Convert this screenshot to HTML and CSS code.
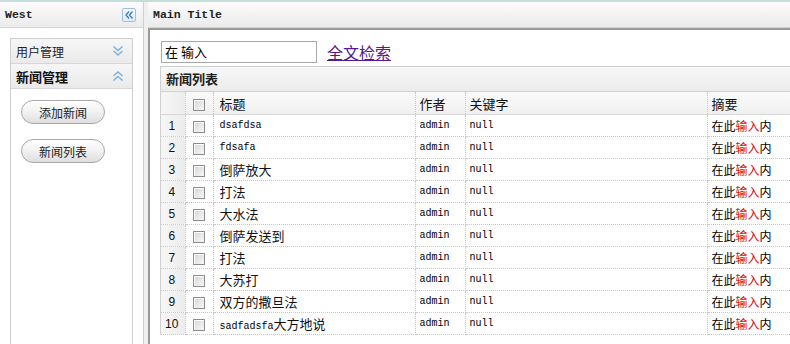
FILE: index.html
```html
<!DOCTYPE html>
<html>
<head>
<meta charset="utf-8">
<link rel="stylesheet" href="styles.css">
</head>
<body>
<div class="top"></div>
<div class="layout">
  <aside class="west">
    <div class="phead">
      <span class="ptitle">West</span>
      <span class="collapse"><svg width="10" height="10" viewBox="0 0 10 10"><path d="M5 1.5 L2 5 L5 8.5 M8.5 1.5 L5.5 5 L8.5 8.5" fill="none" stroke="#3a78b8" stroke-width="1.3"/></svg></span>
    </div>
    <div class="wbody">
      <div class="acc">
        <div class="acch"><span>用户管理</span><svg class="chev" width="12" height="12" viewBox="0 0 12 12"><path d="M1.5 1.5 L6 5.5 L10.5 1.5 M1.5 6 L6 10 L10.5 6" fill="none" stroke="#7ab0dd" stroke-width="1.4"/></svg></div>
        <div class="acch sel"><span>新闻管理</span><svg class="chev" width="12" height="12" viewBox="0 0 12 12"><path d="M1.5 6 L6 2 L10.5 6 M1.5 10.5 L6 6.5 L10.5 10.5" fill="none" stroke="#7ab0dd" stroke-width="1.4"/></svg></div>
        <div class="accb">
          <button class="pill">添加新闻</button>
          <button class="pill">新闻列表</button>
        </div>
      </div>
    </div>
  </aside>
  <div class="split"></div>
  <main class="center">
    <div class="phead"><span class="ptitle">Main Title</span></div>
    <div class="frame">
      <div class="search"><input class="q" type="text" value="在 输入"><a href="#" class="fts">全文检索</a></div>
      <div class="grid">
        <div class="ghead">新闻列表</div>
        <table class="tbl">
          <colgroup><col class="c-num"><col class="c-ck"><col class="c-title"><col class="c-auth"><col class="c-key"><col class="c-sum"></colgroup>
          <thead>
            <tr><th class="num"></th><th class="ck"><span class="box"></span></th><th>标题</th><th>作者</th><th>关键字</th><th>摘要</th></tr>
          </thead>
          <tbody>
            <tr><td class="num">1</td><td class="ck"><span class="box"></span></td><td class="lat">dsafdsa</td><td class="lat">admin</td><td class="lat">null</td><td class="sum">在此<em>输入</em>内</td></tr>
            <tr><td class="num">2</td><td class="ck"><span class="box"></span></td><td class="lat">fdsafa</td><td class="lat">admin</td><td class="lat">null</td><td class="sum">在此<em>输入</em>内</td></tr>
            <tr><td class="num">3</td><td class="ck"><span class="box"></span></td><td>倒萨放大</td><td class="lat">admin</td><td class="lat">null</td><td class="sum">在此<em>输入</em>内</td></tr>
            <tr><td class="num">4</td><td class="ck"><span class="box"></span></td><td>打法</td><td class="lat">admin</td><td class="lat">null</td><td class="sum">在此<em>输入</em>内</td></tr>
            <tr><td class="num">5</td><td class="ck"><span class="box"></span></td><td>大水法</td><td class="lat">admin</td><td class="lat">null</td><td class="sum">在此<em>输入</em>内</td></tr>
            <tr><td class="num">6</td><td class="ck"><span class="box"></span></td><td>倒萨发送到</td><td class="lat">admin</td><td class="lat">null</td><td class="sum">在此<em>输入</em>内</td></tr>
            <tr><td class="num">7</td><td class="ck"><span class="box"></span></td><td>打法</td><td class="lat">admin</td><td class="lat">null</td><td class="sum">在此<em>输入</em>内</td></tr>
            <tr><td class="num">8</td><td class="ck"><span class="box"></span></td><td>大苏打</td><td class="lat">admin</td><td class="lat">null</td><td class="sum">在此<em>输入</em>内</td></tr>
            <tr><td class="num">9</td><td class="ck"><span class="box"></span></td><td>双方的撒旦法</td><td class="lat">admin</td><td class="lat">null</td><td class="sum">在此<em>输入</em>内</td></tr>
            <tr><td class="num">10</td><td class="ck"><span class="box"></span></td><td><span class="lat">sadfadsfa</span>大方地说</td><td class="lat">admin</td><td class="lat">null</td><td class="sum">在此<em>输入</em>内</td></tr>
          </tbody>
        </table>
      </div>
    </div>
  </main>
</div>
</body>
</html>
```

FILE: styles.css
```css
html, body {
  margin: 0;
  padding: 0;
  width: 790px;
  height: 344px;
  overflow: hidden;
  background: #fff;
  font-family: "Noto Sans CJK SC", "Liberation Sans", sans-serif;
  font-size: 12px;
  color: #000;
}

.top {
  height: 2px;
  background: #c4dfdb;
}

.layout {
  display: flex;
  height: 342px;
}

.west {
  width: 143px;
  border-right: 1px solid #cfcfcf;
  display: flex;
  flex-direction: column;
  flex: none;
}

.split {
  width: 4px;
  background: #efefef;
  flex: none;
}

.center {
  flex: 1;
  display: flex;
  flex-direction: column;
  min-width: 0;
}

.phead {
  height: 25px;
  border-bottom: 1px solid #d4d4d4;
  background: linear-gradient(#fdfbfb, #ebebeb);
  display: flex;
  align-items: center;
  padding-left: 5px;
  padding-right: 7px;
  flex: none;
}

.ptitle {
  font-family: "Liberation Mono", "DejaVu Sans Mono", monospace;
  font-weight: bold;
  font-size: 11.5px;
  color: #222;
  flex: 1;
}

.collapse {
  width: 12px;
  height: 12px;
  border: 1px solid #9dc0e2;
  border-radius: 2px;
  background: linear-gradient(#f6fbff, #dfeaf5);
  display: flex;
  align-items: center;
  justify-content: center;
}

.wbody {
  flex: 1;
  display: flex;
  flex-direction: column;
  padding: 10px 10px 0 10px;
  background: #fff;
}

.acc {
  flex: 1;
  border: 1px solid #cfcfcf;
  border-bottom: none;
  display: flex;
  flex-direction: column;
}

.acch {
  height: 24px;
  border-bottom: 1px solid #d6d6d6;
  background: linear-gradient(#f6f6f6, #eaeaea);
  display: flex;
  align-items: center;
  padding-left: 5px;
  padding-right: 8px;
  font-size: 12px;
  color: #222;
}

.acch span {
  flex: 1;
}

.acch.sel {
  font-weight: bold;
  font-size: 13px;
  color: #111;
}

.accb {
  flex: 1;
  padding: 11px 0 0 10px;
  display: flex;
  flex-direction: column;
  align-items: flex-start;
  gap: 15px;
}

.pill {
  width: 84px;
  height: 24px;
  border: 1px solid #a8a8a8;
  border-radius: 12px;
  background: linear-gradient(#ffffff, #f3f3f3 45%, #dedede);
  font-family: "Noto Sans CJK SC", sans-serif;
  font-size: 12px;
  color: #222;
  padding: 0;
}

.frame {
  flex: 1;
  border-top: 2px solid #9a9a9a;
  border-left: 2px solid #9a9a9a;
  padding: 10px 0 0 10px;
  overflow: hidden;
  background: #fff;
}

.search {
  display: flex;
  align-items: center;
  height: 23px;
  padding-left: 1px;
}

.q {
  width: 149px;
  height: 20px;
  border: 1px solid #a9a9a9;
  padding: 0 2px 0 3px;
  margin: 0;
  font-family: "Noto Sans CJK SC", sans-serif;
  font-size: 13px;
  color: #000;
  box-sizing: content-box;
}

.fts {
  margin-left: 10px;
  font-size: 16px;
  color: #551a8b;
  text-decoration: underline;
  line-height: 20px;
}

.grid {
  margin-top: 3px;
  border-left: 1px solid #d0d0d0;
  border-top: 1px solid #d0d0d0;
  width: 700px;
}

.ghead {
  height: 24px;
  line-height: 24px;
  padding-left: 5px;
  font-weight: bold;
  font-size: 13px;
  color: #222;
  background: linear-gradient(#f7f7f7, #ebebeb);
  border-bottom: 1px solid #d0d0d0;
}

.tbl {
  border-collapse: collapse;
  table-layout: fixed;
  width: 700px;
}

.c-num { width: 24px; }
.c-ck { width: 28px; }
.c-title { width: 202px; }
.c-auth { width: 50px; }
.c-key { width: 242px; }
.c-sum { width: 154px; }

.tbl th {
  height: 22px;
  font-weight: normal;
  font-size: 13px;
  text-align: left;
  padding: 0 4px;
  background: linear-gradient(#fafafa, #f0f0f0);
  border-right: 1px dotted #c8c8c8;
  border-bottom: 1px solid #d8d8d8;
  color: #111;
}

.tbl td {
  height: 21px;
  padding: 0 4px;
  font-size: 13px;
  border-right: 1px dotted #c8c8c8;
  border-bottom: 1px dotted #c8c8c8;
  white-space: nowrap;
  overflow: hidden;
  color: #111;
}

.tbl .num {
  background: linear-gradient(90deg, #f6f6f6, #ececec);
  text-align: center;
  font-family: "Liberation Sans", sans-serif;
  font-size: 12px;
  padding: 0 2px 0 0;
  border-right: 1px dotted #c8c8c8;
}

.tbl .ck {
  text-align: center;
  padding: 0;
}

.box {
  display: inline-block;
  width: 10px;
  height: 10px;
  border: 1px solid #8c8c8c;
  background: linear-gradient(135deg, #d6d6d6, #f7f7f7);
  vertical-align: middle;
  box-shadow: inset 1px 1px 0 #fff;
}

.tbl th:nth-child(3),
.tbl td:nth-child(3) {
  padding-left: 6px;
}

.lat,
.tbl td.lat {
  font-family: "Liberation Mono", "DejaVu Sans Mono", monospace;
  font-size: 10px;
  color: #000;
}

.tbl td.sum {
  font-size: 12px;
  color: #000;
}

.sum em {
  font-style: normal;
  color: #d01010;
}
```
